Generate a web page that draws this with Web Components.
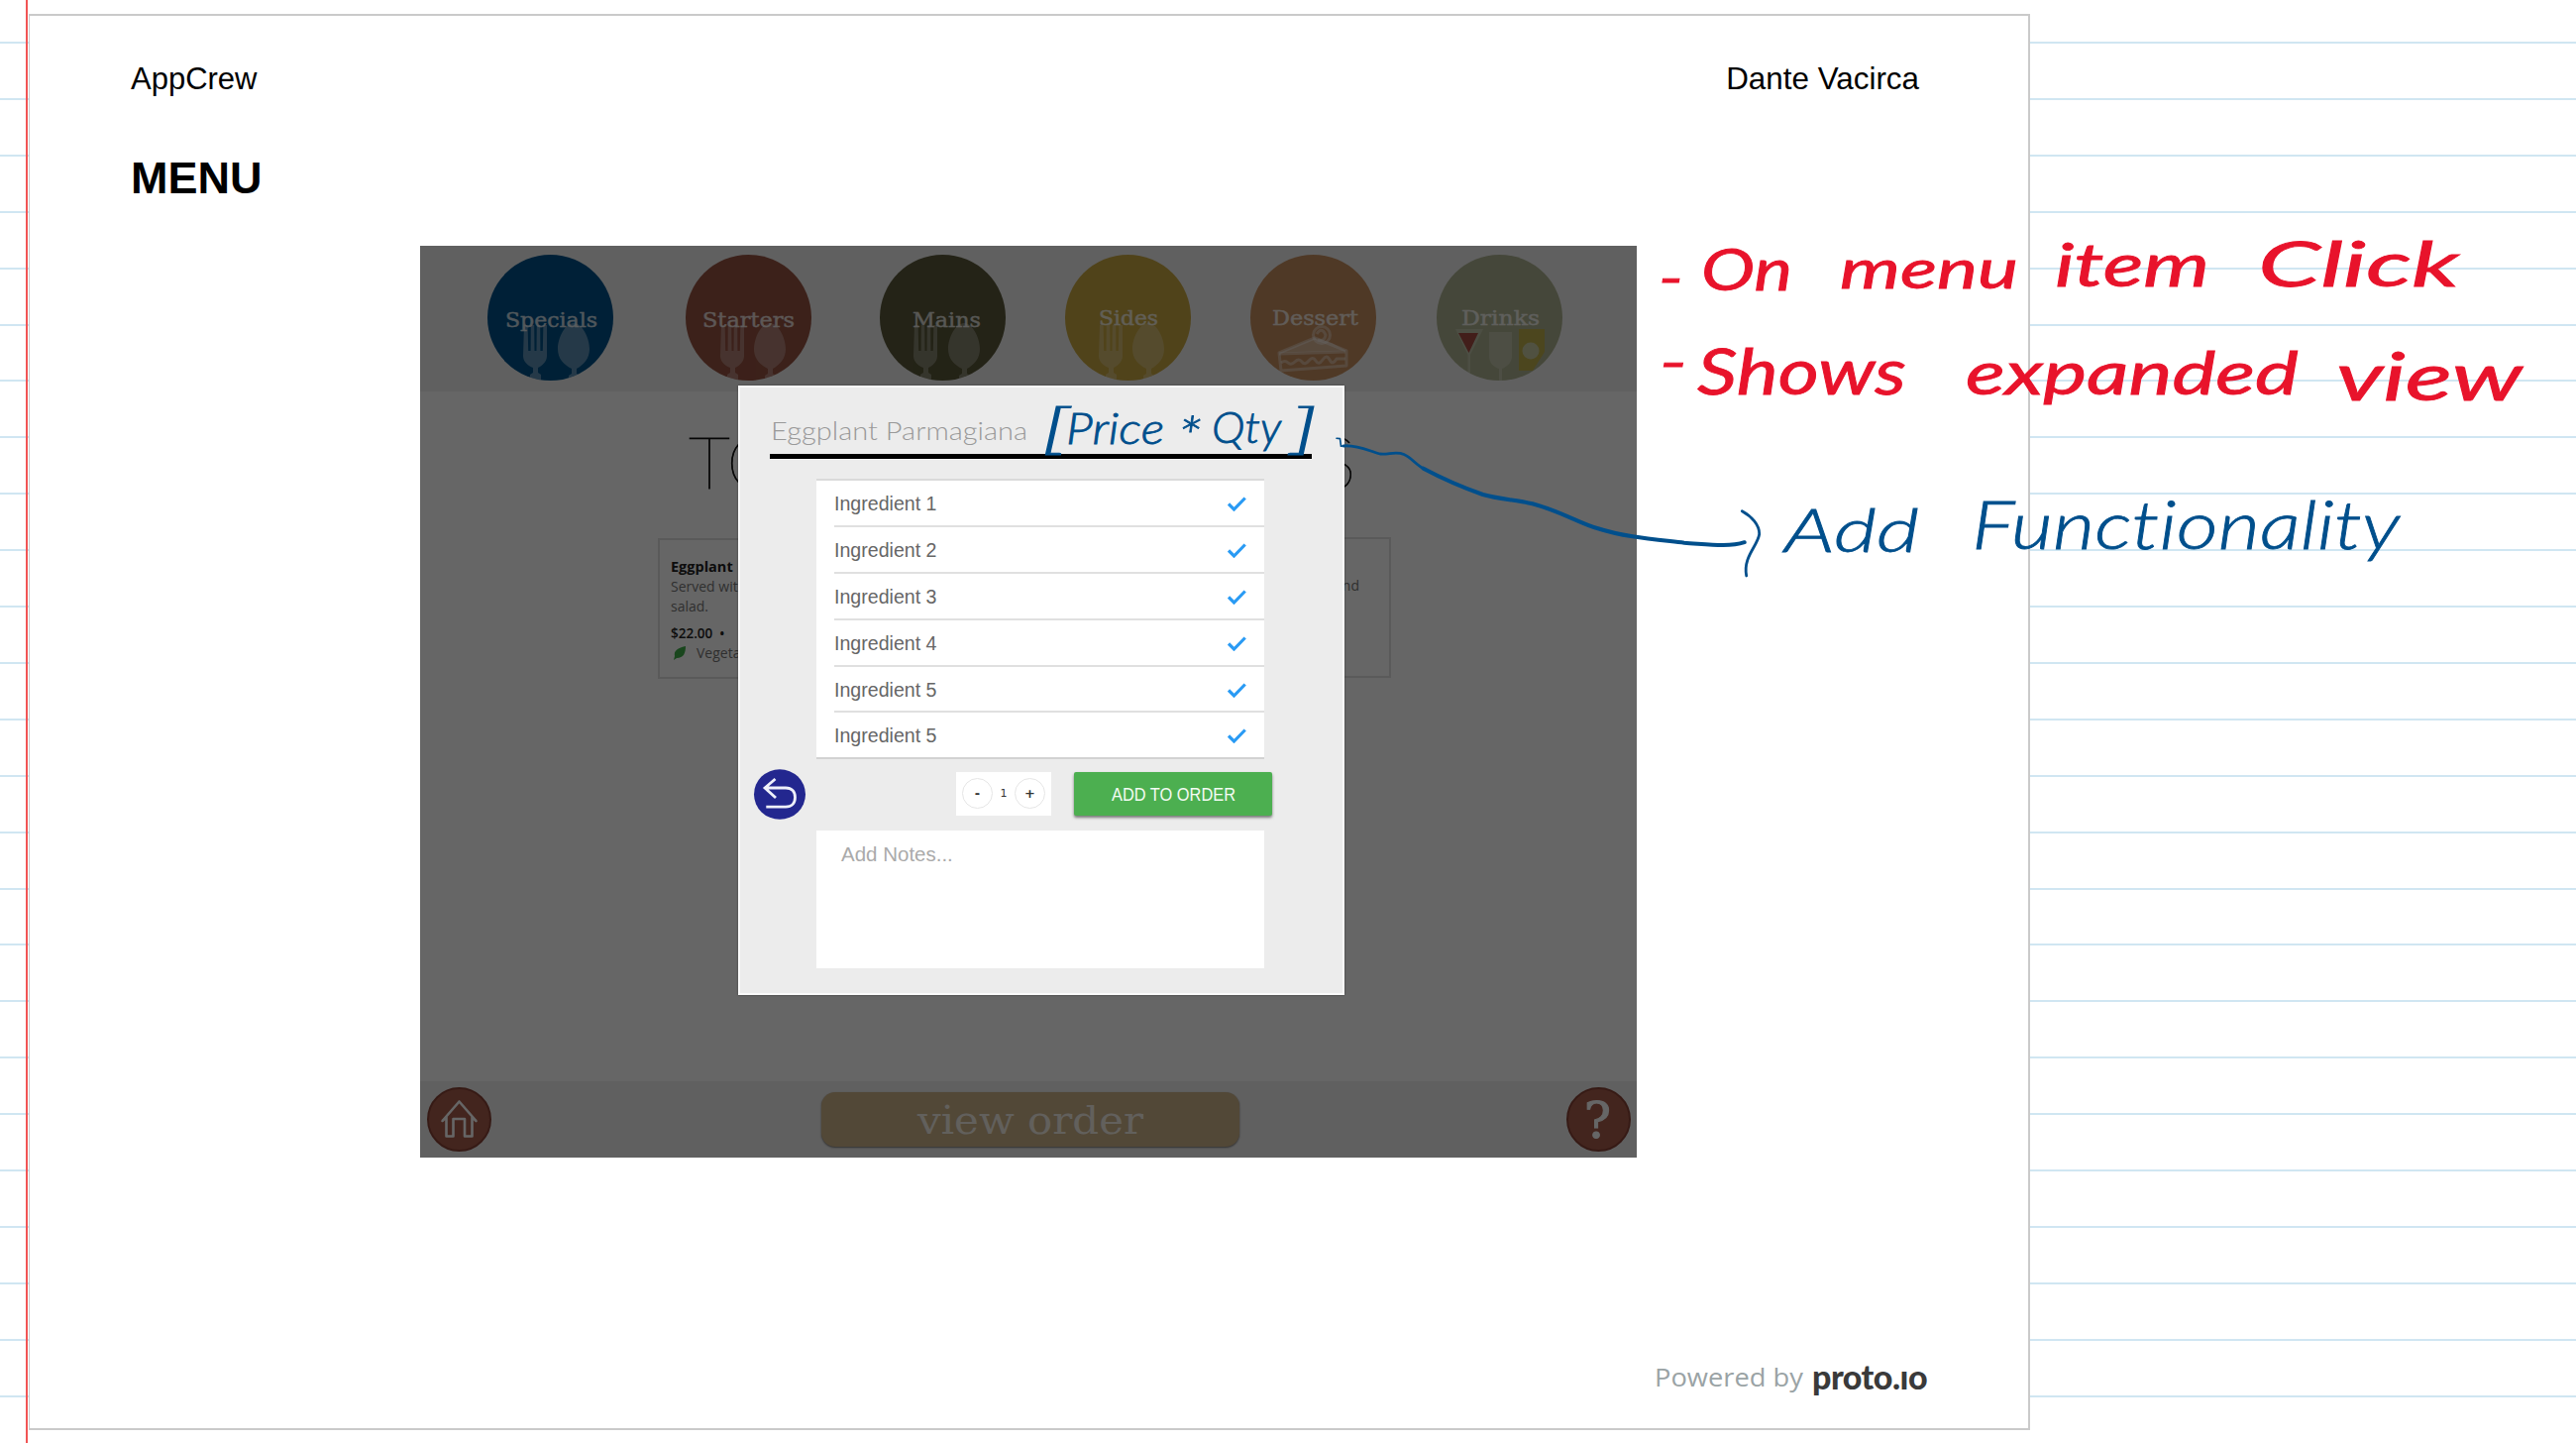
<!DOCTYPE html>
<html lang="en">
<head>
<meta charset="utf-8">
<title>AppCrew – Menu</title>
<style>
html,body{margin:0;background:#fff;font-family:"Liberation Sans",Arial,sans-serif}
body{width:2600px;height:1456px;overflow:hidden}
</style>
</head>
<body>
<note-page></note-page>
<script>
const define = (name, render) => customElements.define(name, class extends HTMLElement {
  connectedCallback() {
    if (this.shadowRoot) return;
    this.attachShadow({ mode: 'open' }).innerHTML = render(this);
  }
});
const attr = (el, n, d = '') => el.getAttribute(n) ?? d;

/* One line of text set to an exact width. */
define('fit-text', el => {
  const w = attr(el, 'w'), h = attr(el, 'h'), b = attr(el, 'base');
  return `<style>:host{display:block;width:${w}px;height:${h}px;flex:none}svg{display:block;overflow:visible}</style>
  <svg width="${w}" height="${h}"><text x="0" y="${b}" textLength="${w}" lengthAdjust="spacingAndGlyphs" fill="currentColor">${attr(el, 'text')}</text></svg>`;
});

define('ruled-paper', () => {
  let r = '';
  for (let i = 0; i < 25; i++) r += `<rect x="0" y="${Math.round(42 + i * 56.9)}" width="2600" height="2"/>`;
  return `<style>:host{display:block;width:2600px;height:1456px}svg{display:block}</style>
  <svg width="2600" height="1456"><g fill="#d0e6f2">${r}</g><rect x="26" y="0" width="2" height="1456" fill="#f15555"/></svg>`;
});

const cutlery = (f, s, o = .27) => `<g fill="#fff" opacity="${o}">
  <path d="M${f} 71h3.6l.6 26h2.4l.2-26h3.4l.3 26h2l.3-26h3.4l.2 26h2.4l.6-26h3.6v31c0 6-5 10-9 12v5l3 2v6h-11v-6l3-2v-5c-5-2-10-6-10-12z"/>
  <path d="M${s + 16} 69c8 0 16 14 16 26c0 10-6 16-13 20v5l3 2v6h-11v-6l3-2v-5c-8-4-14-10-14-20c0-12 8-26 16-26z"/></g>`;
const art = {
  specials: cutlery(37, 71, .36), starters: cutlery(36, 69), mains: cutlery(35, 69), sides: cutlery(35, 68, .24),
  dessert: `<g fill="none" stroke="#fff" stroke-opacity=".36" stroke-width="3" stroke-linejoin="round">
    <path d="M29 99L65 84L97 97V112L31 117Z"/><path d="M29 99L97 97L82 89L65 84Z" fill="#fff" fill-opacity=".35" stroke="none"/>
    <path d="M29 100L96 98M31 109q4-3 7 0t7-1t7 0t7-1t7 0t7-1t7 0t7-1l9 0"/><circle cx="72" cy="81" r="8.5"/><path d="M67 80q5-8 9 1q-1 7-8 5"/></g>`,
  drinks: `<path d="M19 75H47L34 101V126H31.500V101Z" fill="#fff" opacity=".22"/><path d="M22 79H42L32.500 99Z" fill="#a54c42"/>
    <path d="M53 78H76V102C76 109 71 113 66 115V127H63V115C57 113 53 109 53 102Z" fill="#fff" opacity=".24"/>
    <path d="M83 75H109V98L97 117H83Z" fill="#bfb04c"/><circle cx="95" cy="97" r="8.500" fill="#c9cba4"/>`
};
define('menu-disc', el => `<style>:host{display:block;width:127px;height:127px;flex:none;margin-left:${attr(el, 'gap', 0)}px}
  svg{display:block}text{font:20px "DejaVu Serif",serif;fill:#fff;stroke:#fff;stroke-width:.4;opacity:.78}</style>
  <svg width="127" height="127"><clipPath id="c"><circle cx="63.500" cy="63.500" r="63.500"/></clipPath>
  <g clip-path="url(#c)"><rect width="127" height="127" fill="${attr(el, 'color')}"/>${art[attr(el, 'kind')]}</g>
  <text x="${attr(el, 'tx')}" y="${attr(el, 'ty', 71)}" textLength="${attr(el, 'tw')}" lengthAdjust="spacingAndGlyphs">${attr(el, 'label')}</text></svg>`);

define('dish-card', el => `<style>:host{display:block;box-sizing:border-box;border:2px solid #e2e2e2;width:${attr(el, 'w')}px;height:142px;padding:17px 11px;
  font:14px/20px "Open Sans",sans-serif;color:#777;white-space:nowrap}</style><slot></slot>`);

define('menu-screen', () => `<style>
  :host{display:flex;flex-direction:column;width:1228px;height:920px;background:#fff;position:relative;overflow:hidden}
  .bar{display:flex;box-sizing:border-box;background:#f0f0f0;flex:none}
  header{height:147px;padding:9px 0 0 68px}
  main{flex:1;display:flex;flex-direction:column}
  .h{display:flex;justify-content:space-between;margin:34px 284px 0 271px;font:100 72px Lato,sans-serif;color:#111;stroke:#111;stroke-width:.8px}
  .h span{width:50px}
  .cards{display:flex;justify-content:space-between;margin:33px 248px 0 240px}
  dish-card:first-child{margin-top:1px}
  b{display:block;color:#222;font-weight:700;font-size:14.500px}
  .price{margin-top:7px;color:#222;font-weight:600;font-size:13.500px}
  .veg{display:flex;align-items:center;gap:10px;padding-left:3px}
  .right{padding-top:20px;text-align:right;width:315px}
  footer{height:77px;padding:0 6px 0 7px;align-items:center;justify-content:space-between}
  svg{display:block}
  .order{width:422px;height:55px;border-radius:14px;background:#cdb38b;box-shadow:0 1px 2px #777;display:flex;justify-content:center;color:#fff;font:39px "DejaVu Serif",serif;margin-left:2px}
  .order fit-text{opacity:.8}
  .shade{position:absolute;inset:0;background:rgba(0,0,0,.6)}
  </style>
  <header class="bar">
    <menu-disc kind="specials" label="Specials" color="#005289" tx="18" ty="73" tw="93"></menu-disc>
    <menu-disc kind="starters" label="Starters" color="#965343" tx="17" ty="73" tw="93" gap="73"></menu-disc>
    <menu-disc kind="mains" label="Mains" color="#5a583a" tx="33" ty="73" tw="69" gap="69"></menu-disc>
    <menu-disc kind="sides" label="Sides" color="#c8a743" tx="34" tw="60" gap="60"></menu-disc>
    <menu-disc kind="dessert" label="Dessert" color="#c68f60" tx="22" tw="87" gap="60"></menu-disc>
    <menu-disc kind="drinks" label="Drinks" color="#adb291" tx="25" tw="79" gap="61"></menu-disc>
  </header>
  <main>
    <div class="h"><span><fit-text text="TO" w="96" h="80" base="64"></fit-text></span><fit-text text="S" w="36" h="80" base="64"></fit-text></div>
    <div class="cards">
      <dish-card w="360"><b>Eggplant</b>Served with<br>salad.
        <div class="price">$22.00 &nbsp;•</div>
        <div class="veg"><svg width="13" height="14"><path d="M12 0C3 2 0 5 1 10L0 14L3 12C10 12 12 7 12 0Z" fill="#3fae49"/></svg>Vegeta</div></dish-card>
      <dish-card w="360"><div class="right">and</div></dish-card>
    </div>
  </main>
  <footer class="bar">
    <svg width="65" height="65" viewBox="0 0 65 65"><circle cx="32.500" cy="32.500" r="31.500" fill="#a95c4b" stroke="#874336" stroke-width="2"/>
      <path d="M16 34L20 30V49.500H27V32H38.500V49.500H46V30L50 34L33 14.500Z" fill="none" stroke="#fff" stroke-width="2.600" stroke-linejoin="round" transform="translate(-.5 0)"/></svg>
    <div class="order"><fit-text text="view order" w="228" h="55" base="42"></fit-text></div>
    <svg width="65" height="65" viewBox="0 0 65 65"><circle cx="32.500" cy="32.500" r="31.500" fill="#a95c4b" stroke="#874336" stroke-width="2"/>
      <text x="31.500" y="51" text-anchor="middle" font-family="DejaVu Serif" font-size="51" fill="#fff" stroke="#fff">?</text></svg>
  </footer>
  <div class="shade"></div>`);

define('ingredient-row', () => `<style>
  :host{display:flex;align-items:center;justify-content:space-between;height:46.900px;box-sizing:border-box;margin-left:18px;padding:2px 18px 0 0;
  border-bottom:2px solid #e0e0e0;font-size:19.600px;color:#666}svg{display:block}</style>
  <slot></slot><svg width="19" height="15"><path d="M1 7.500L6.500 13L17.700 1.500" fill="none" stroke="#2a9bf4" stroke-width="3.200"/></svg>`);

define('order-dialog', () => `<style>
  :host{display:flex;flex-direction:column;box-sizing:border-box;width:612px;height:615px;background:#ececec;border:2px solid #fafafa;box-shadow:0 0 2px rgba(0,0,0,.4)}
  .title{margin:26px 0 0 31px;font:300 25px Lato,sans-serif;color:#999}
  .rule{height:5px;width:547px;margin:9px 0 0 30px;background:#000;border-bottom:1px solid #fff}
  .list{width:452px;margin:19px 0 0 77px;background:#fff;border-top:2px solid #dadada}
  ingredient-row:last-child{margin-left:0;padding-left:18px;border-color:#d2d2d2}
  .actions{display:flex;align-items:center;height:51px;margin:9px 0 0 14px}
  .step{display:flex;align-items:center;justify-content:space-between;box-sizing:border-box;width:96px;height:44px;margin-left:152px;padding:0 6px;background:#fff;font:11px "DejaVu Sans",sans-serif;color:#333}
  .step i{box-sizing:border-box;width:31px;height:31px;border:1px solid #e6e6e6;border-radius:50%;display:flex;align-items:center;justify-content:center;font:bold 13px "DejaVu Sans",sans-serif}
  .add{width:200px;height:44px;margin-left:23px;border-radius:2px;background:#4caf50;box-shadow:0 2px 3px rgba(0,0,0,.5);color:#f3fbf3;display:flex;justify-content:center;font-size:17.500px}
  .notes{box-sizing:border-box;width:452px;height:139px;margin:12px 0 0 77px;padding:12px 25px;background:#fff;font-size:20.500px;line-height:24px;color:#aaa}
  svg{display:block}
  </style>
  <fit-text class="title" text="Eggplant Parmagiana" w="259" h="32" base="27"></fit-text>
  <div class="rule"></div>
  <div class="list">
    <ingredient-row>Ingredient 1</ingredient-row><ingredient-row>Ingredient 2</ingredient-row><ingredient-row>Ingredient 3</ingredient-row>
    <ingredient-row>Ingredient 4</ingredient-row><ingredient-row>Ingredient 5</ingredient-row><ingredient-row>Ingredient 5</ingredient-row>
  </div>
  <div class="actions">
    <svg width="52" height="51" viewBox="761 775.500 52 51" overflow="visible"><ellipse cx="787" cy="802" rx="26" ry="25.300" fill="#23278f"/>
      <path d="M782.500 786.500L772 795.500L783 805.500M772 795.500H793C799 795.500 802.500 799 802.500 805C802.500 811 799 814.700 793 814.700H773.300" fill="none" stroke="#eef0fa" stroke-width="2.800"/></svg>
    <div class="step"><i>-</i><span>1</span><i>+</i></div>
    <div class="add"><fit-text text="ADD TO ORDER" w="125" h="44" base="28.500"></fit-text></div>
  </div>
  <div class="notes">Add Notes...</div>`);

/* Pen notes laid over the sheet. */
define('ink-layer', () => {
  const t = (s, x, y, w, size) => `<text x="${x}" y="${y}" textLength="${w}" lengthAdjust="spacingAndGlyphs" font-size="${size}">${s}</text>`;
  return `<style>:host{display:block;width:2600px;height:1456px}svg{display:block}
  text{font-family:Lato,sans-serif;font-style:italic;font-variant-ligatures:none}.red{fill:#e8132b;stroke:#e8132b;stroke-width:.8}.blue{fill:#004f8c;font-weight:300;stroke:#004f8c;stroke-width:.8}</style>
  <svg width="2600" height="1456">
  <g class="red">${t('-', 1674, 299, 25, 52)}${t('On', 1717, 293, 92, 58)}${t('menu', 1857, 291, 180, 55)}${t('item', 2074, 289, 156, 60)}${t('Click', 2279, 289, 203, 63)}
  ${t('-', 1675, 384, 28, 52)}${t('Shows', 1713, 398, 211, 64)}${t('expanded', 1984, 398, 336, 60)}${t('view', 2358, 404, 188, 66)}</g>
  <g class="blue">${t('[', 1051, 452, 28, 55)}${t('Price', 1076, 448, 99, 44)}${t('*', 1188, 461, 25, 56)}${t('Qty', 1223, 447, 70, 44)}${t(']', 1302, 452, 28, 55)}
  ${t('Add', 1801, 557, 136, 61)}${t('Functionality', 1990, 554, 432, 68)}</g>
  <g fill="none" stroke="#004f8c" stroke-linecap="round" stroke-linejoin="round">
    <path stroke-width="1.600" d="M1349 442.300L1352.500 442.600L1353.500 450.300L1360 449.300"/>
    <path stroke-width="2.800" d="M1356 450C1372 449 1381 455 1393 458C1401 459 1409 455 1417 458.500C1425 462 1429 469 1438 473.500"/>
    <path stroke-width="4" d="M1436.700 472.700C1456 483 1477 492 1496.700 499C1514 504 1530 504 1546.700 508.300C1576 516 1594 528 1612 533C1640 542 1668 544 1700 547.700C1722 549 1745 552.500 1760.700 547.200"/>
    <path stroke-width="2.800" d="M1758.300 515.700C1768 521 1776 530 1775.700 539C1774 551 1759 562 1762.700 581"/>
  </g></svg>`;
});

define('proto-badge', () => `<style>:host{display:flex;gap:9px;height:34px}
  .by{font:26px "Open Sans",sans-serif;color:#9aa3a5}
  .logo{font:900 34px/34px Lato,sans-serif;color:#3a3a3a;width:116px;letter-spacing:-.5px;display:flex}
  .i{clip-path:inset(11px -2px -4px -2px)}</style>
  <fit-text class="by" text="Powered by" w="150" h="34" base="27"></fit-text>
  <div class="logo"><span>proto.</span><span class="i">i</span><span>o</span></div>`);

define('note-page', () => `<style>
  :host{display:block;position:relative;width:2600px;height:1456px;overflow:hidden}
  .paper,.ink{position:absolute;inset:0}
  .sheet{position:relative;box-sizing:border-box;width:2020px;height:1429px;margin:0 0 0 29px;top:14px;background:#fff;border:2px solid #cacaca;border-left-width:1px;
    display:flex;flex-direction:column;padding:46px 102px 0}
  .top{display:flex;justify-content:space-between;font-size:31px;line-height:36px;color:#000;padding-right:8px}
  .top span:last-child{font-size:31.400px}
  h1{margin:57px 0 0;font-size:45px;line-height:50px;color:#000}
  .stage{position:relative;width:1228px;margin:43px 0 0 292px}
  order-dialog{position:absolute;left:321px;top:141px}
  proto-badge{margin:204px 0 0 1538px}
  </style>
  <ruled-paper class="paper"></ruled-paper>
  <div class="sheet">
    <div class="top"><span>AppCrew</span><span>Dante Vacirca</span></div>
    <h1>MENU</h1>
    <div class="stage"><menu-screen></menu-screen><order-dialog></order-dialog></div>
    <proto-badge></proto-badge>
  </div>
  <ink-layer class="ink"></ink-layer>`);
</script>
</body>
</html>
